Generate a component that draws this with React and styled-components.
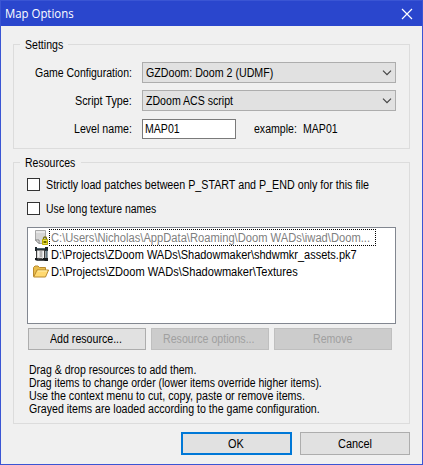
import React from 'react';
import styled, { createGlobalStyle } from 'styled-components';

const GlobalStyle = createGlobalStyle`
  * { box-sizing: border-box; }
  body { margin: 0; }
  button { font: inherit; }
`;

const Dialog = styled.div`
  width: 423px;
  height: 465px;
  border: 1px solid #3a55d4;
  background: #f0f0f0;
  color: #000;
  font: 12px/14px "Liberation Sans", Arial, sans-serif;
  display: flex;
  flex-direction: column;
`;

const TitleBar = styled.header`
  height: 25px;
  flex: none;
  padding: 0 9px 0 4px;
  display: flex;
  align-items: center;
  justify-content: space-between;
  background: #2a46cd;
  color: #fff;
  font-family: "Open Sans", "Noto Sans", sans-serif;
`;

const Content = styled.main`
  padding: 12px 12px 0;
`;

/* Condensed text: $w is the laid-out width, $k the horizontal scale. */
const TextBox = styled.span`
  display: block;
  flex: none;
  width: ${(p) => p.$w}px;
  white-space: pre;
`;
const TextInner = styled.span`
  display: inline-block;
  transform: scaleX(${(p) => p.$k});
  transform-origin: 0 50%;
`;
const Text = ({ w, k = 0.88, children }) => (
  <TextBox $w={w}>
    <TextInner $k={k}>{children}</TextInner>
  </TextBox>
);

const Group = styled.fieldset`
  width: 397px;
  height: ${(p) => p.$height}px;
  margin: 0 0 ${(p) => p.$gap}px;
  padding: 0 13px 0 6px;
  border: 1px solid #dcdcdc;
`;
const Legend = styled.legend`
  height: 13px;
  line-height: 15px;
  padding: 0 5px;
`;

const Fields = styled.div`
  padding-top: 11px;
`;
const Field = styled.div`
  display: flex;
  align-items: center;
  height: 21px;
  margin-bottom: 7px;
`;
const FieldLabel = styled.label`
  width: 122px;
  padding-right: 10px;
  display: flex;
  justify-content: flex-end;
`;
const Select = styled.div`
  width: 254px;
  height: 21px;
  padding: 1px 3px 0 3px;
  display: flex;
  align-items: center;
  justify-content: space-between;
  border: 1px solid #adadad;
  background: #e1e1e1;
`;
const TextField = styled.div`
  width: 94px;
  height: 20px;
  padding: 0 2px;
  margin-right: 18px;
  display: flex;
  align-items: center;
  border: 1px solid #7a7a7a;
  background: #fff;
`;
const Example = styled.div`
  display: flex;
  gap: 5px;
`;

const Checks = styled.div`
  padding-top: 9px;
`;
const CheckRow = styled.label`
  display: flex;
  align-items: center;
  height: 13px;
  margin: 0 0 11px 7px;
  gap: 6px;
`;
const Check = styled.span`
  width: 13px;
  height: 13px;
  border: 1px solid #333;
  background: #fff;
`;

const List = styled.div`
  width: 369px;
  height: 97px;
  margin: 12px 0 4px 7px;
  padding: 1px 0 0 5px;
  border: 1px solid #828790;
  background: #fff;
`;
const Item = styled.div`
  height: 17px;
  display: flex;
  align-items: center;
`;
const ItemIcon = styled.svg`
  width: 16px;
  height: 17px;
  flex: none;
`;
const ItemName = styled.div`
  width: 327px;
  height: 17px;
  padding-left: 1px;
  display: flex;
  align-items: center;
  border: 1px dotted ${(p) => (p.$focused ? '#000' : 'transparent')};
  color: ${(p) => (p.$focused ? '#808080' : '#000')};
`;

const ButtonRow = styled.div`
  display: flex;
  gap: 5px;
  margin-left: 8px;
`;
const Button = styled.button`
  width: ${(p) => p.$width}px;
  height: ${(p) => p.$height}px;
  padding: 0;
  display: flex;
  align-items: center;
  justify-content: center;
  border: ${(p) => (p.$primary ? '2px solid #0078d7' : '1px solid #adadad')};
  background: #e1e1e1;
  color: #000;
  &:disabled {
    border-color: #bfbfbf;
    background: #ccc;
    color: #a0a0a0;
  }
`;

const Help = styled.div`
  margin: 14px 0 0 9px;
  line-height: 13px;
`;

const Footer = styled.footer`
  display: flex;
  justify-content: flex-end;
  gap: 8px;
`;

const Chevron = () => (
  <svg width="10" height="6" viewBox="0 0 10 6">
    <path d="M1 0.6L5 4.6L9 0.6" fill="none" stroke="#444" strokeWidth="1.2" />
  </svg>
);

const CloseIcon = () => (
  <svg width="12" height="12" viewBox="0 0 12 12">
    <path d="M1 1L11 11M11 1L1 11" fill="none" stroke="#fff" strokeWidth="1.2" />
  </svg>
);

const LockedFileIcon = () => (
  <ItemIcon viewBox="0 0 16 17">
    <path d="M2.5 1.5H12.5V14.5H6L2.5 11Z" fill="#d6d6d6" stroke="#a8a8a8" />
    <path d="M3 2H12V4H3Z" fill="#e8e8e8" />
    <path d="M2.5 11H6V14.5Z" fill="#fff" stroke="#777" strokeWidth=".9" />
    <path d="M10.5 10.5V9.5Q10.5 8 12 8Q13.5 8 13.5 9.5V10.5" fill="none" stroke="#7d7510" strokeWidth="1.3" />
    <rect x="9" y="10" width="6" height="6" rx=".8" fill="#b9ad00" />
    <path d="M10 11.5H14M10 14.5H14" stroke="#e8df50" />
    <rect x="11.2" y="12" width="1.6" height="2" fill="#555000" />
  </ItemIcon>
);

const ArchiveIcon = () => (
  <ItemIcon viewBox="0 0 16 17">
    <path d="M3.5 4H11.5V13.5H6L3.5 12Z" fill="#d9d9d9" stroke="#3a3a3a" />
    <path d="M5.5 5V11M10.5 5V12" stroke="#f6f6f6" />
    <path d="M8 5V11" stroke="#b4b4b4" strokeWidth="2" />
    <path d="M3 12.5H9" stroke="#555" />
    <path d="M2 1H4V2H12V1H15V5H12V4H4V5H2Z" fill="#1d262b" />
    <path d="M4 2.7H12" stroke="#6c8796" strokeWidth=".8" />
    <path d="M13.5 4V13" stroke="#30424c" strokeWidth="2" />
    <path d="M13.5 5V12" stroke="#7f99a6" strokeWidth=".6" />
    <path d="M2 12H4L5 13.5H9L10 12H15V15H12L11 14.7H4L2 14Z" fill="#15191c" />
  </ItemIcon>
);

const FolderIcon = () => (
  <ItemIcon viewBox="0 0 16 17">
    <path d="M.5 13.5V4.5L2 3H5L6.5 4.5H12.5V7" fill="#e9bd4c" stroke="#b98a2e" />
    <path d="M.7 14L4 7H15.6L12.5 14Z" fill="#ffd970" stroke="#b98a2e" strokeLinejoin="round" />
    <path d="M4.7 8H14" stroke="#fff0ae" />
  </ItemIcon>
);

export default function App() {
  return (
    <Dialog>
      <GlobalStyle />
      <TitleBar>
        <Text w={70} k={0.95}>Map Options</Text>
        <CloseIcon />
      </TitleBar>
      <Content>
        <Group $height={111} $gap={7}>
          <Legend><Text w={38} k={0.88}>Settings</Text></Legend>
          <Fields>
            <Field>
              <FieldLabel><Text w={97} k={0.875}>Game Configuration:</Text></FieldLabel>
              <Select><Text w={128} k={0.888}>GZDoom: Doom 2 (UDMF)</Text><Chevron /></Select>
            </Field>
            <Field>
              <FieldLabel><Text w={57} k={0.9}>Script Type:</Text></FieldLabel>
              <Select><Text w={87} k={0.882}>ZDoom ACS script</Text><Chevron /></Select>
            </Field>
            <Field>
              <FieldLabel><Text w={58} k={0.885}>Level name:</Text></FieldLabel>
              <TextField><Text w={36} k={0.88}>MAP01</Text></TextField>
              <Example>
                <Text w={44} k={0.88}>example:</Text>
                <Text w={36} k={0.88}>MAP01</Text>
              </Example>
            </Field>
          </Fields>
        </Group>
        <Group $height={268} $gap={8}>
          <Legend><Text w={51} k={0.877}>Resources</Text></Legend>
          <Checks>
            <CheckRow>
              <Check />
              <Text w={324} k={0.892}>Strictly load patches between P_START and P_END only for this file</Text>
            </CheckRow>
            <CheckRow>
              <Check />
              <Text w={110} k={0.87}>Use long texture names</Text>
            </CheckRow>
          </Checks>
          <List>
            <Item>
              <LockedFileIcon />
              <ItemName $focused>
                <Text w={319} k={0.93}>{'C:\\Users\\Nicholas\\AppData\\Roaming\\Doom WADs\\iwad\\Doom...'}</Text>
              </ItemName>
            </Item>
            <Item>
              <ArchiveIcon />
              <ItemName>
                <Text w={307} k={0.916}>{'D:\\Projects\\ZDoom WADs\\Shadowmaker\\shdwmkr_assets.pk7'}</Text>
              </ItemName>
            </Item>
            <Item>
              <FolderIcon />
              <ItemName>
                <Text w={248} k={0.924}>{'D:\\Projects\\ZDoom WADs\\Shadowmaker\\Textures'}</Text>
              </ItemName>
            </Item>
          </List>
          <ButtonRow>
            <Button $width={118} $height={22}><Text w={74} k={0.885}>Add resource...</Text></Button>
            <Button $width={118} $height={22} disabled><Text w={94} k={0.885}>Resource options...</Text></Button>
            <Button $width={118} $height={22} disabled><Text w={41} k={0.88}>Remove</Text></Button>
          </ButtonRow>
          <Help>
            <Text w={168} k={0.877}>Drag &amp; drop resources to add them.</Text>
            <Text w={294} k={0.871}>Drag items to change order (lower items override higher items).</Text>
            <Text w={276} k={0.892}>Use the context menu to cut, copy, paste or remove items.</Text>
            <Text w={292} k={0.884}>Grayed items are loaded according to the game configuration.</Text>
          </Help>
        </Group>
        <Footer>
          <Button $width={111} $height={23} $primary><Text w={18} k={0.91}>OK</Text></Button>
          <Button $width={110} $height={23}><Text w={35} k={0.91}>Cancel</Text></Button>
        </Footer>
      </Content>
    </Dialog>
  );
}
